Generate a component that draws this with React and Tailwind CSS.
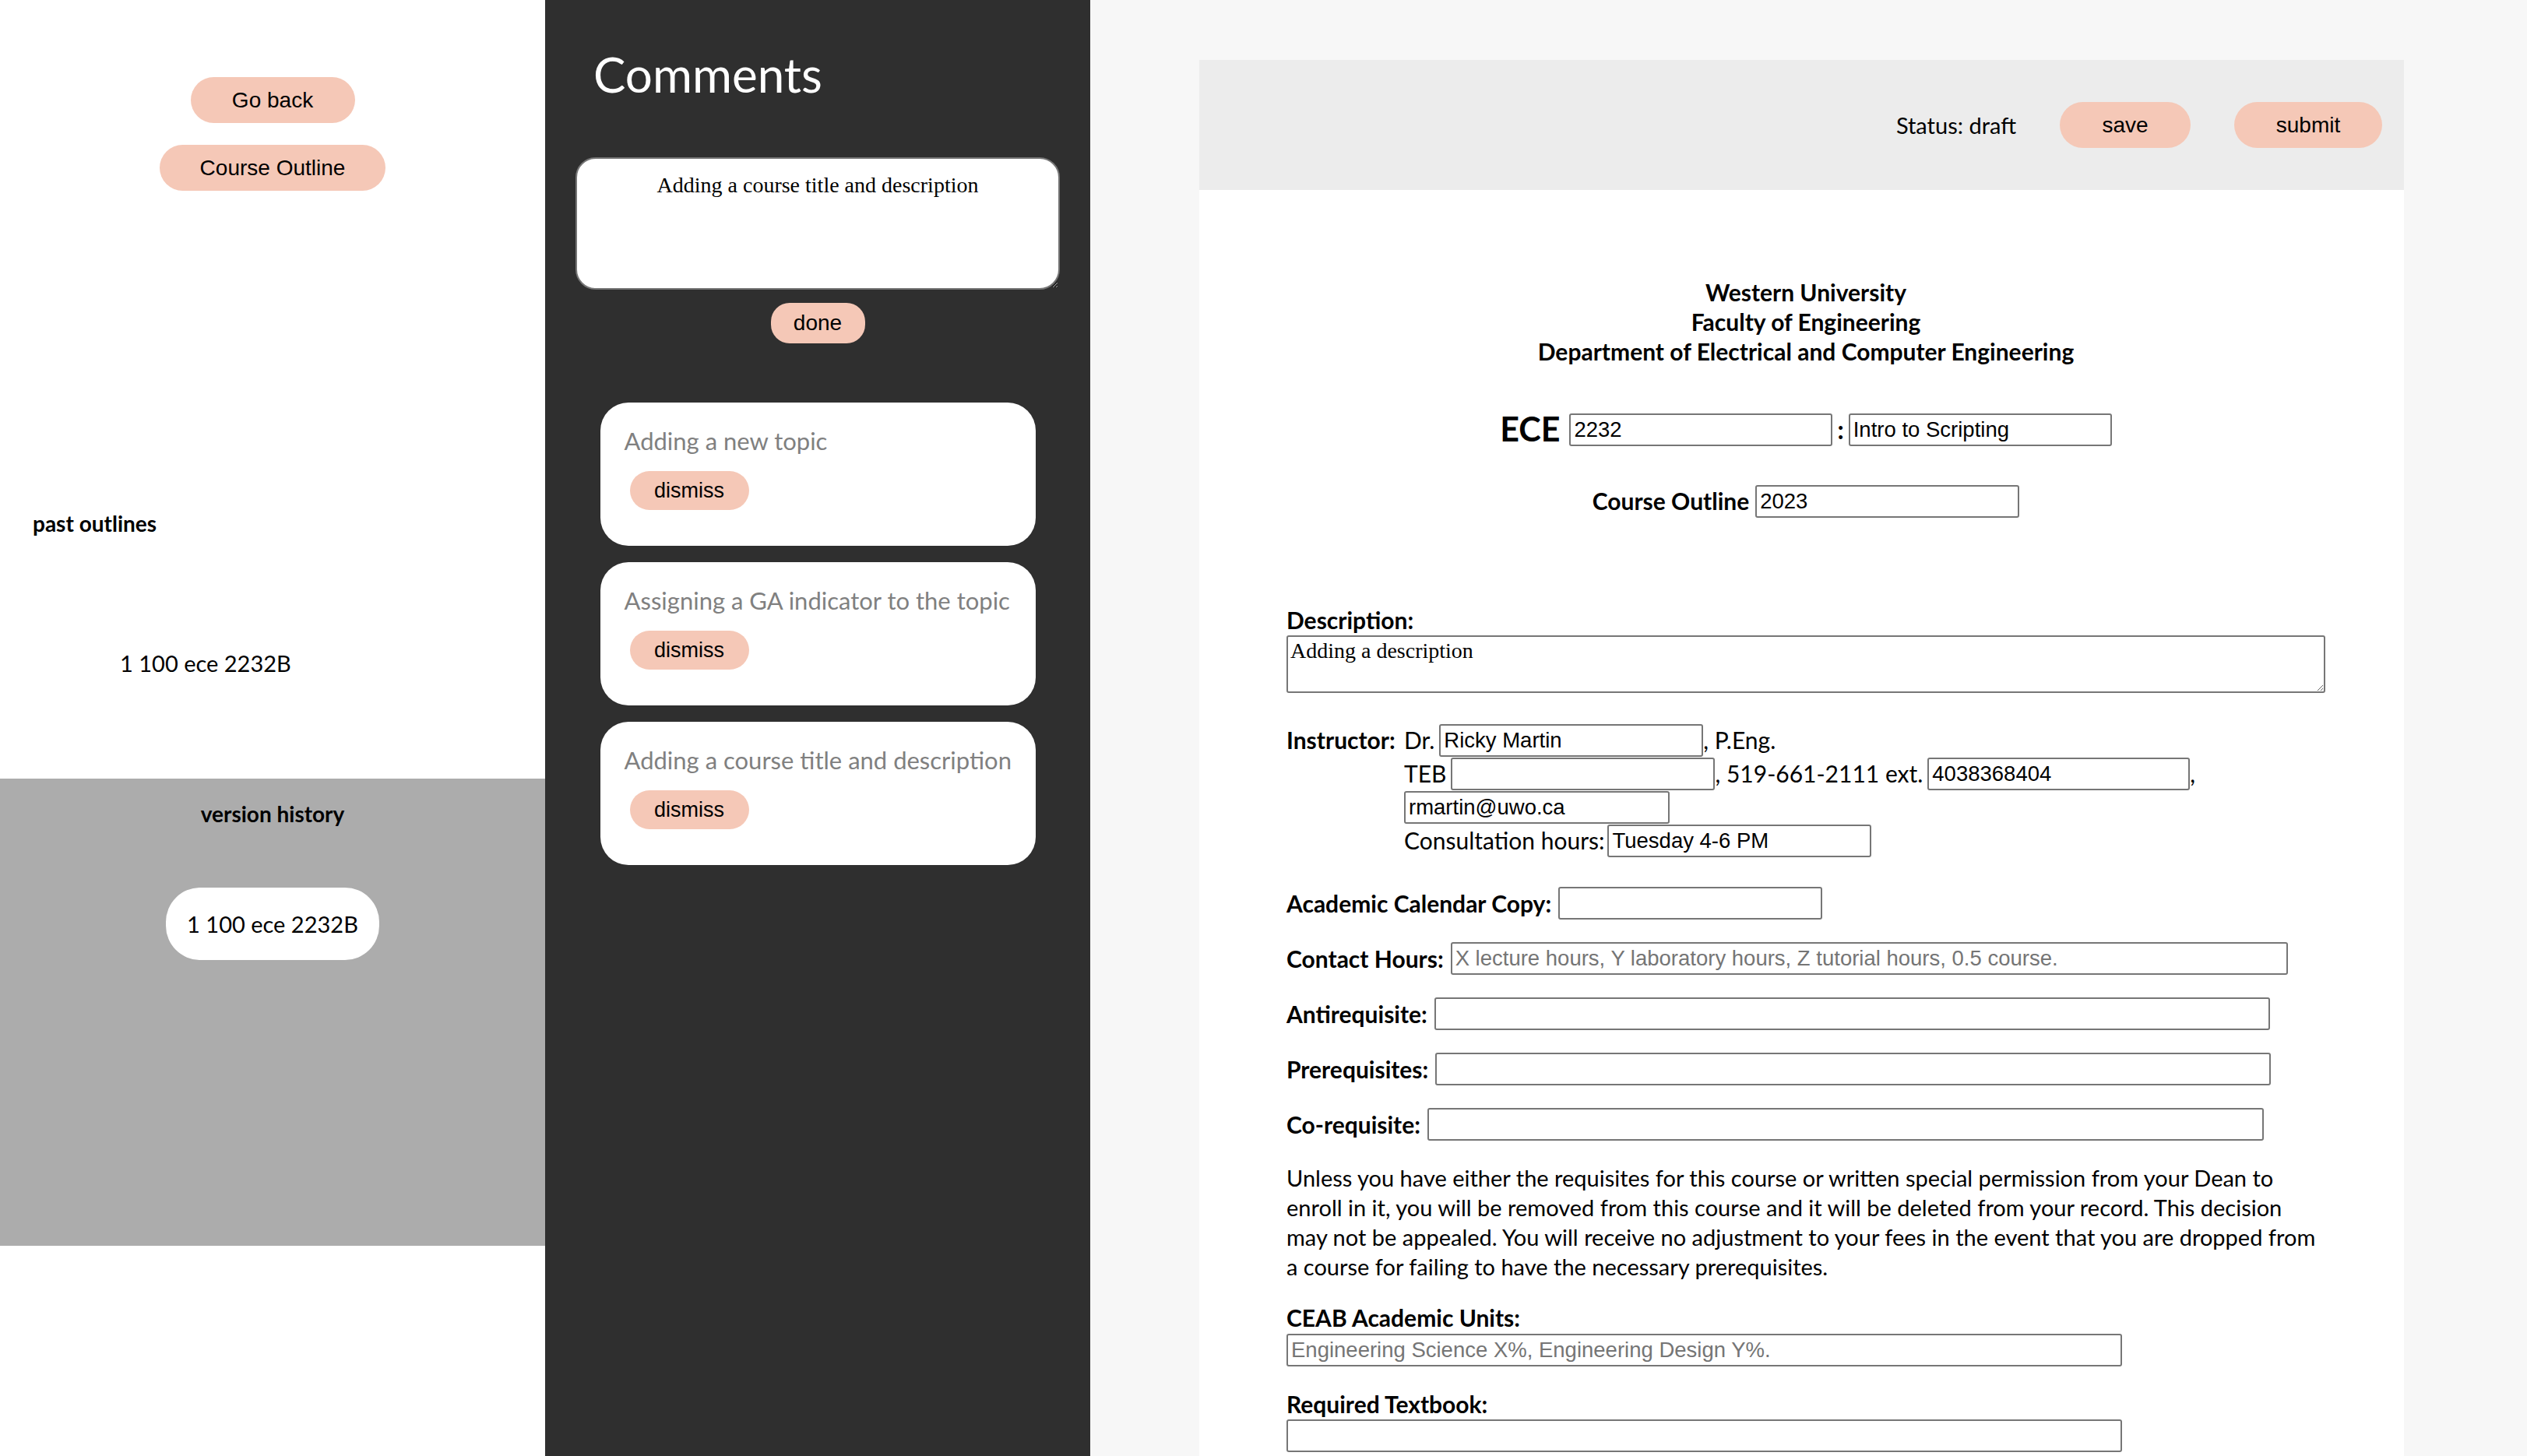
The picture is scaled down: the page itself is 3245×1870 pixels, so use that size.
import React from 'react';

const btnFont = "font-['Liberation_Sans',Arial,sans-serif]";
const inputCls =
  "h-[42px] rounded-[3px] border-2 border-[#767676] bg-white px-[4px] font-['Liberation_Sans',Arial,sans-serif] text-[27.5px] text-black placeholder:text-[#757575] outline-none";

function Pill({ children, className = '' }) {
  return (
    <button
      className={`flex items-center justify-center rounded-full bg-[#f5c8b7] font-['Liberation_Sans',Arial,sans-serif] text-[28px] text-black ${className}`}
    >
      {children}
    </button>
  );
}

function CommentCard({ text }) {
  return (
    <div className="flex h-[184px] w-[559px] flex-col items-start rounded-[36px] bg-white pl-[31px] pt-[30px]">
      <p className="text-[31px] leading-[38px] text-[#808080]">{text}</p>
      <button className="ml-[7px] mt-[20px] h-[50px] w-[153px] rounded-full bg-[#f5c8b7] font-['Liberation_Sans',Arial,sans-serif] text-[27px] text-black">
        dismiss
      </button>
    </div>
  );
}

function FieldRow({ label, width, placeholder, className = '' }) {
  return (
    <div className={`flex h-[42px] items-center ${className}`}>
      <span className="mr-[9px] text-[30px] font-bold">{label}</span>
      <input className={`${inputCls} ${width}`} placeholder={placeholder} />
    </div>
  );
}

export default function App() {
  return (
    <div className="flex h-[1870px] w-[3245px] overflow-hidden bg-[#f7f7f7] font-['Lato',sans-serif] text-black">
      {/* left sidebar */}
      <aside className="flex w-[700px] shrink-0 flex-col bg-white">
        <div className="flex flex-col items-center gap-[28px] pt-[99px]">
          <Pill className="h-[59px] w-[211px]">Go back</Pill>
          <Pill className="h-[59px] w-[290px]">Course Outline</Pill>
        </div>
        <h4 className="mt-[411px] pl-[42px] text-[28px] font-bold leading-[32px]">past outlines</h4>
        <p className="mt-[145px] pl-[154px] text-[29px] leading-[38px]">1 100 ece 2232B</p>
        <div className="mt-[129px] flex h-[600px] flex-col items-center bg-[#acacac] pt-[29px]">
          <h4 className="text-[28px] font-bold leading-[32px]">version history</h4>
          <div className="mt-[79px] flex h-[93px] w-[274px] items-center justify-center rounded-[44px] bg-white text-[29px]">
            1 100 ece 2232B
          </div>
        </div>
      </aside>

      {/* comments */}
      <section className="flex w-[700px] shrink-0 flex-col bg-[#2f2f2f]">
        <h2 className="pl-[62px] pt-[59px] text-[62px] leading-[72px] text-white">Comments</h2>
        <textarea
          className="ml-[39px] mt-[71px] h-[170px] w-[622px] resize-y rounded-[26px] border-2 border-[#767676] bg-white px-[10px] pt-[18px] text-center font-['Liberation_Serif','Times_New_Roman',serif] text-[28px] leading-[32px] text-black outline-none"
          defaultValue="Adding a course title and description"
        />
        <button
          className={`mt-[17px] h-[52px] w-[121px] self-center rounded-[24px] bg-[#f5c8b7] text-[28px] text-black ${btnFont}`}
        >
          done
        </button>
        <div className="mt-[76px] flex flex-col items-center gap-[21px]">
          <CommentCard text="Adding a new topic" />
          <CommentCard text="Assigning a GA indicator to the topic" />
          <CommentCard text="Adding a course title and description" />
        </div>
      </section>

      {/* outline document */}
      <main className="flex-1 pl-[140px] pt-[77px]">
        <div className="w-[1547px] bg-white pb-[200px]">
          <header className="flex h-[167px] items-center justify-end gap-[56px] bg-[#ececec] pr-[28px]">
            <span className="text-[29px]">Status: draft</span>
            <Pill className="h-[59px] w-[168px]">save</Pill>
            <Pill className="h-[59px] w-[190px]">submit</Pill>
          </header>

          <div className="pl-[112px] pr-[101px]">
            <div className="mt-[112px] text-center text-[30px] font-bold leading-[38px]">
              <p>Western University</p>
              <p>Faculty of Engineering</p>
              <p>Department of Electrical and Computer Engineering</p>
            </div>

            <div className="mt-[61px] flex h-[41px] items-center justify-center">
              <span className="mr-[12px] text-[43px] font-bold">ECE</span>
              <input className={`${inputCls} h-[41px] w-[338px]`} defaultValue="2232" />
              <span className="mx-[6px] text-[32px] font-bold">:</span>
              <input className={`${inputCls} h-[41px] w-[338px]`} defaultValue="Intro to Scripting" />
            </div>

            <div className="mt-[51px] flex h-[41px] items-center justify-center">
              <span className="mr-[8px] text-[30px] font-bold">Course Outline</span>
              <input className={`${inputCls} h-[41px] w-[339px]`} defaultValue="2023" />
            </div>

            <p className="mt-[113px] text-[30px] font-bold leading-[38px]">Description:</p>
            <textarea
              className="mt-[1px] block h-[74px] w-full resize-y rounded-[3px] border-2 border-[#767676] bg-white px-[3px] pt-[2px] font-['Liberation_Serif','Times_New_Roman',serif] text-[28px] leading-[31px] text-black outline-none"
              defaultValue="Adding a description"
            />

            <div className="mt-[39px] flex text-[30px]">
              <span className="flex h-[43px] w-[151px] shrink-0 items-center font-bold">Instructor:</span>
              <div className="flex flex-col">
                <div className="flex h-[43px] items-center">
                  <span className="mr-[6px]">Dr.</span>
                  <input className={`${inputCls} w-[339px]`} defaultValue="Ricky Martin" />
                  <span>, P.Eng.</span>
                </div>
                <div className="flex h-[43px] items-center">
                  <span className="mr-[6px]">TEB</span>
                  <input className={`${inputCls} w-[339px]`} />
                  <span className="mr-[6px]">, 519-661-2111 ext.</span>
                  <input className={`${inputCls} w-[337px]`} defaultValue="4038368404" />
                  <span>,</span>
                </div>
                <div className="flex h-[43px] items-center">
                  <input className={`${inputCls} w-[341px]`} defaultValue="rmartin@uwo.ca" />
                </div>
                <div className="flex h-[43px] items-center">
                  <span className="mr-[4px]">Consultation hours:</span>
                  <input className={`${inputCls} w-[339px]`} defaultValue="Tuesday 4-6 PM" />
                </div>
              </div>
            </div>

            <FieldRow className="mt-[38px]" label="Academic Calendar Copy:" width="w-[339px]" />
            <FieldRow
              className="mt-[29px]"
              label="Contact Hours:"
              width="w-[1075px]"
              placeholder="X lecture hours, Y laboratory hours, Z tutorial hours, 0.5 course."
            />
            <FieldRow className="mt-[29px]" label="Antirequisite:" width="w-[1073px]" />
            <FieldRow className="mt-[29px]" label="Prerequisites:" width="w-[1073px]" />
            <FieldRow className="mt-[29px]" label="Co-requisite:" width="w-[1074px]" />

            <p className="mt-[29px] max-w-[1326px] text-[29px] leading-[38px]">
              Unless you have either the requisites for this course or written special permission from your Dean to
              enroll in it, you will be removed from this course and it will be deleted from your record. This decision
              may not be appealed. You will receive no adjustment to your fees in the event that you are dropped from a
              course for failing to have the necessary prerequisites.
            </p>

            <p className="mt-[27px] text-[30px] font-bold leading-[38px]">CEAB Academic Units:</p>
            <input
              className={`${inputCls} mt-[2px] block h-[41px] w-[1073px]`}
              placeholder="Engineering Science X%, Engineering Design Y%."
            />
            <p className="mt-[29px] text-[30px] font-bold leading-[38px]">Required Textbook:</p>
            <input className={`${inputCls} mt-[1px] block h-[41px] w-[1073px]`} />
          </div>
        </div>
      </main>
    </div>
  );
}
